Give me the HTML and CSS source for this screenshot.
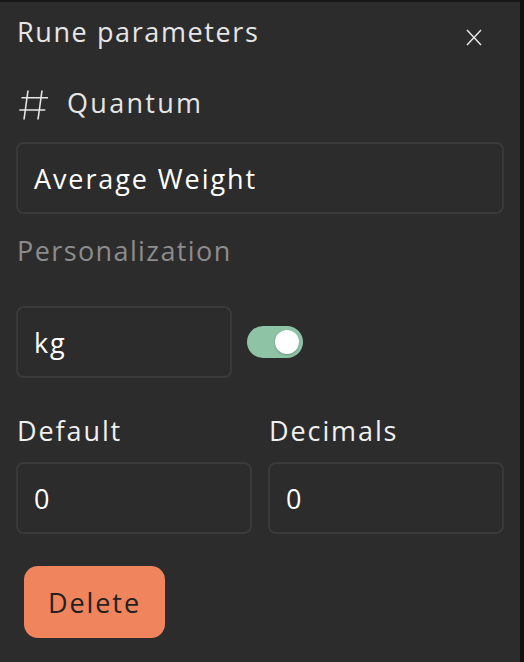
FILE: index.html
```html
<!DOCTYPE html>
<html>
<head>
<meta charset="utf-8">
<link rel="stylesheet" href="styles.css">
</head>
<body>
<div class="topbar"></div>
<div class="panel">
  <div class="header">
    <span class="title">Rune parameters</span>
    <svg class="close" width="16" height="17" viewBox="0 0 16 17"><path d="M1 1 L15 16 M15 1 L1 16" stroke="#e6e6e6" stroke-width="1.5" fill="none"/></svg>
  </div>
  <div class="kind">
    <svg class="hash" width="30" height="30" viewBox="0 0 30 30"><path d="M3.5 7.7 H30 M1.3 20 H27.3 M10 0.5 L6 29.5 M24 0.5 L20 29.5" stroke="#e6e6e6" stroke-width="1.6" fill="none"/></svg>
    <span class="kind-name">Quantum</span>
  </div>
  <div class="field wide">Average Weight</div>
  <div class="section">Personalization</div>
  <div class="unit-row">
    <div class="field unit">kg</div>
    <div class="toggle"><div class="knob"></div></div>
  </div>
  <div class="pair">
    <div class="col">
      <div class="label">Default</div>
      <div class="field">0</div>
    </div>
    <div class="col">
      <div class="label">Decimals</div>
      <div class="field">0</div>
    </div>
  </div>
  <button class="delete">Delete</button>
</div>
<div class="side"></div>
</body>
</html>
```
FILE: styles.css
```css
html, body {
  margin: 0;
  padding: 0;
  background: #141414;
  width: 524px;
  height: 662px;
  overflow: hidden;
  font-family: "Open Sans", sans-serif;
  letter-spacing: 1.9px;
}
.topbar {
  height: 2px;
  background: #161616;
}
.panel {
  width: 520px;
  height: 660px;
  box-sizing: border-box;
  background: #2c2c2c;
  padding: 13px 16px 0 16px;
  color: #e8e8e8;
}
.header {
  display: flex;
  justify-content: space-between;
  align-items: flex-start;
  height: 34px;
}
.title {
  font-size: 27px;
  line-height: 34px;
  letter-spacing: 1.6px;
  padding-left: 1px;
  color: #e6e6e6;
}
.close {
  margin-top: 14px;
  margin-right: 22px;
}
.kind {
  display: flex;
  align-items: center;
  margin-top: 37px;
  height: 34px;
}
.hash {
  margin-left: 2px;
  margin-top: 4px;
}
.kind-name {
  margin-left: 19px;
  font-size: 27px;
  line-height: 34px;
  letter-spacing: 2.3px;
  color: #e6e6e6;
}
.field {
  box-sizing: border-box;
  height: 72px;
  border: 2px solid #3a3a3a;
  border-radius: 8px;
  padding: 0 16px;
  display: flex;
  align-items: center;
  font-size: 27px;
  color: #ffffff;
}
.wide {
  margin-top: 22px;
}
.section {
  margin-top: 20px;
  font-size: 27px;
  line-height: 34px;
  letter-spacing: 1.4px;
  color: #8c8c8c;
  padding-left: 1px;
}
.unit-row {
  display: flex;
  align-items: center;
  margin-top: 38px;
}
.unit {
  width: 216px;
}
.toggle {
  margin-left: 15px;
  width: 56px;
  height: 32px;
  border-radius: 16px;
  background: #8fc3a5;
  display: flex;
  align-items: center;
  justify-content: flex-end;
  padding-right: 4px;
  box-sizing: border-box;
}
.knob {
  width: 24px;
  height: 24px;
  border-radius: 50%;
  background: #ffffff;
  box-shadow: 0 1px 2px rgba(0,0,0,0.25);
}
.pair {
  display: grid;
  grid-template-columns: 1fr 1fr;
  column-gap: 16px;
  margin-top: 36px;
}
.label {
  font-size: 27px;
  line-height: 34px;
  color: #f0f0f0;
  padding-left: 1px;
  margin-bottom: 14px;
}
.delete {
  margin-top: 32px;
  margin-left: 8px;
  width: 141px;
  height: 72px;
  border: none;
  border-radius: 14px;
  background: #f0845c;
  color: #222222;
  font-family: "Open Sans", sans-serif;
  letter-spacing: 1.9px;
  font-size: 27px;
  padding: 0;
}
.side {
  position: absolute;
  top: 0;
  left: 520px;
  width: 4px;
  height: 662px;
  background: #111111;
}
```
